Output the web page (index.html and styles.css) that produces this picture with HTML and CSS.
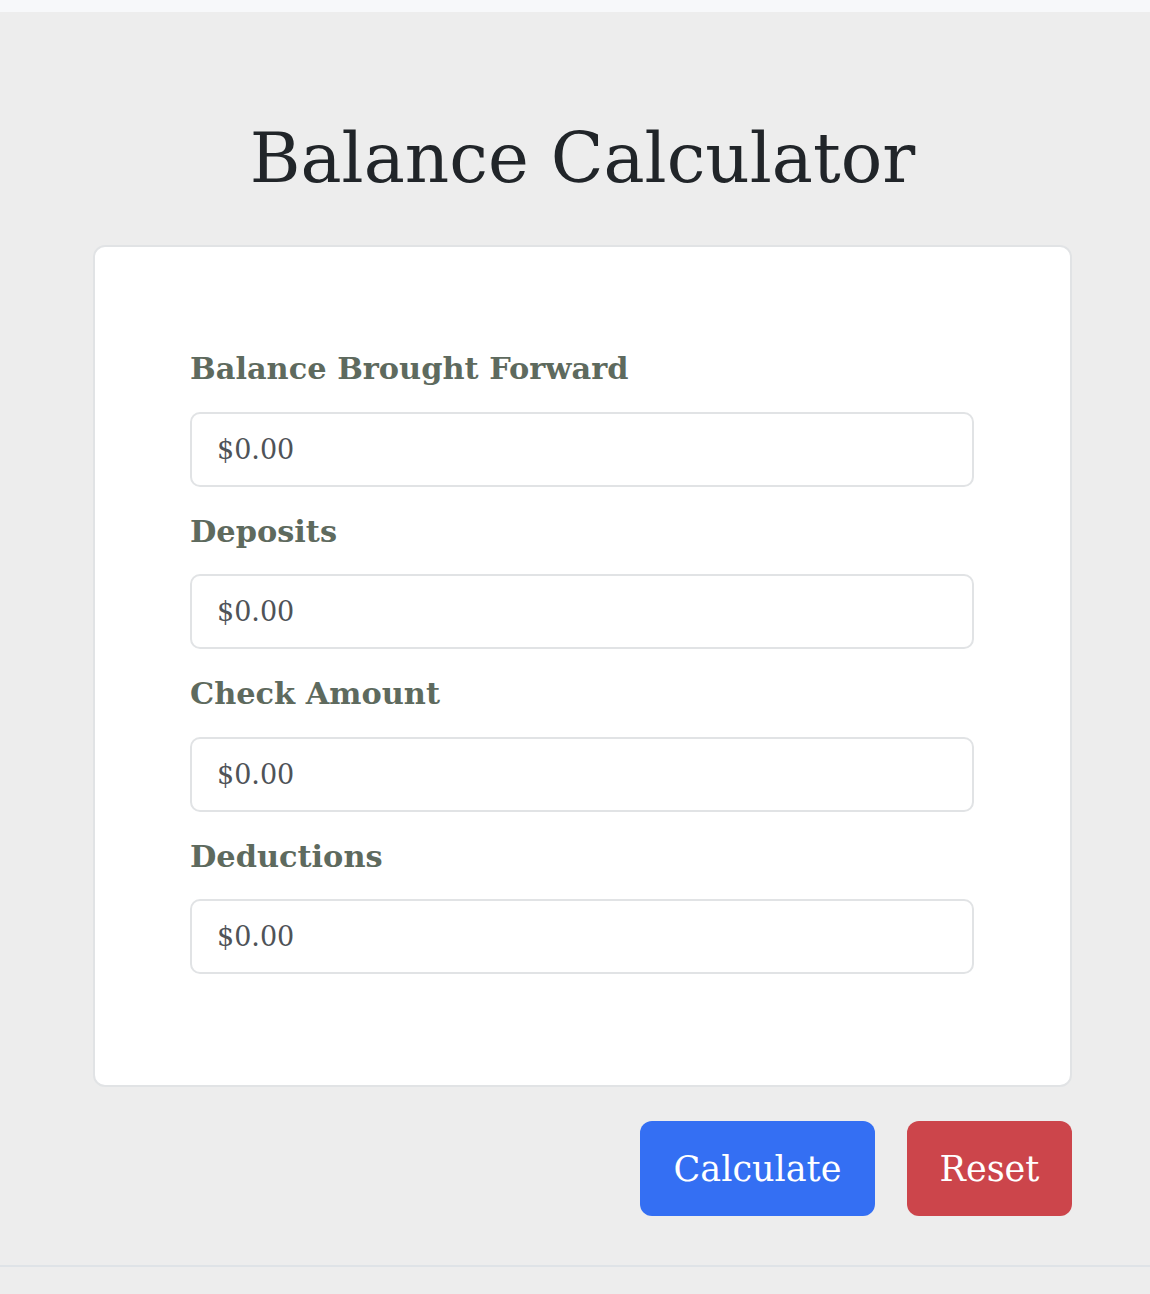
FILE: index.html
```html
<!DOCTYPE html>
<html>
<head>
<meta charset="utf-8">
<link rel="stylesheet" href="styles.css">
</head>
<body>
<div class="topbar"></div>
<main class="wrap">
  <h1 class="title">Balance Calculator</h1>
  <div class="card">
    <form class="form">
      <label class="label">Balance Brought Forward</label>
      <input class="input" type="text" value="$0.00">
      <label class="label">Deposits</label>
      <input class="input" type="text" value="$0.00">
      <label class="label">Check Amount</label>
      <input class="input" type="text" value="$0.00">
      <label class="label">Deductions</label>
      <input class="input" type="text" value="$0.00">
    </form>
  </div>
  <div class="actions">
    <button class="btn btn-blue" type="button">Calculate</button>
    <button class="btn btn-red" type="button">Reset</button>
  </div>
</main>
<div class="rule"></div>
</body>
</html>
```
FILE: styles.css
```css
html, body {
  margin: 0;
  padding: 0;
}
body {
  background: #ededed;
  font-family: "DejaVu Serif", "Liberation Serif", serif;
  height: 1294px;
  overflow: hidden;
}
.topbar {
  height: 12px;
  background: #f7f8fa;
}
.wrap {
  width: 979px;
  margin-left: 93px;
}
.title {
  margin: 0;
  height: 233px;
  text-align: center;
  font-weight: 400;
  font-size: 69px;
  color: #212529;
  line-height: 292px;
}
.card {
  width: 979px;
  box-sizing: border-box;
  height: 842px;
  background: #fff;
  border: 2px solid #e1e3e5;
  border-radius: 12px;
  padding: 77px 0 0 95px;
}
.form {
  width: 784px;
  display: flex;
  flex-direction: column;
}
.label {
  display: block;
  height: 87.5px;
  line-height: 88px;
  font-size: 30.4px;
  font-weight: 700;
  color: #5e6a5e;
}
.input {
  box-sizing: border-box;
  width: 784px;
  height: 75px;
  border: 2px solid #e1e3e5;
  border-radius: 10px;
  padding: 0 0 0 25px;
  font-family: inherit;
  font-size: 27px;
  color: #4f5358;
  background: #fff;
  outline: none;
}
.actions {
  display: flex;
  justify-content: flex-end;
  gap: 32px;
  margin-top: 34px;
}
.btn {
  height: 95px;
  border: none;
  border-radius: 12px;
  font-family: inherit;
  font-size: 35px;
  color: #fff;
  padding: 0;
}
.btn-blue {
  width: 235px;
  background: #346ff3;
}
.btn-red {
  width: 165px;
  background: #cc454b;
}
.rule {
  margin-top: 49px;
  height: 2px;
  background: #dfe3e7;
}
```
